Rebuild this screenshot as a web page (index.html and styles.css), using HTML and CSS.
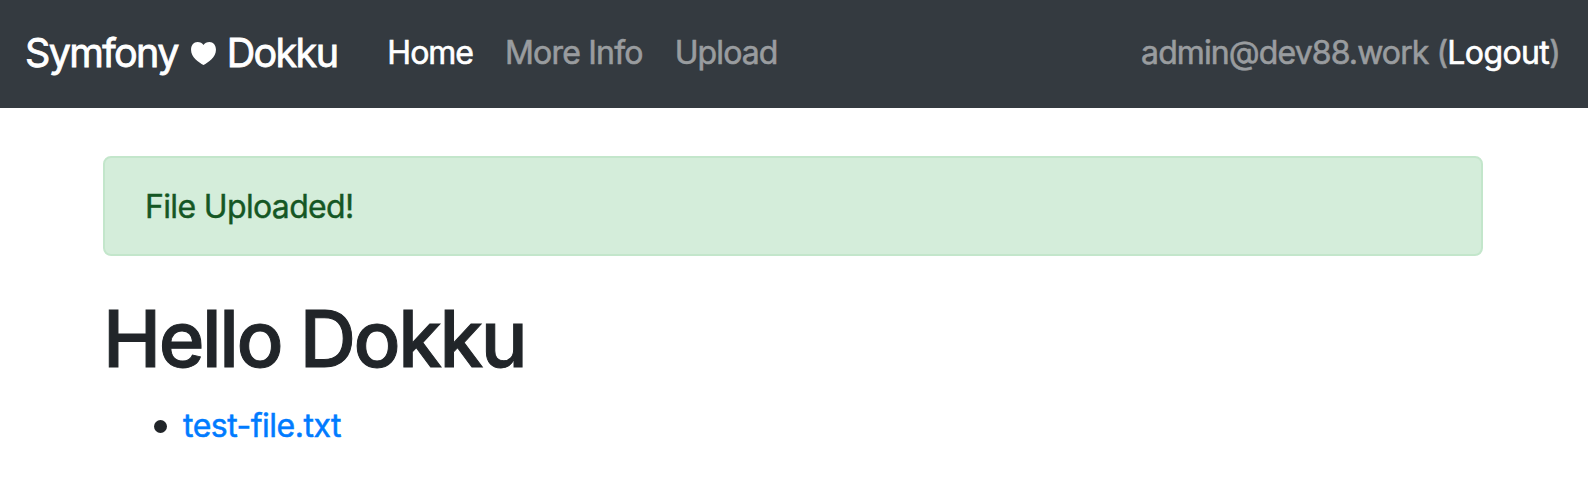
FILE: index.html
```html
<!DOCTYPE html>
<html lang="en">
<head>
<meta charset="utf-8">
<title>Hello Dokku</title>
<link rel="stylesheet" href="styles.css">
</head>
<body>
<nav class="navbar">
  <a class="brand"><span class="brand-a">Symfony</span><svg class="heart" viewBox="0 0 26 24"><path d="M13 24C8 21 0 16 0 8C0 3 3 0 6.700 0C9.500 0 11.800 1 13 3.200C14.200 1 16.500 0 19.300 0C23 0 26 3 26 8C26 16 18 21 13 24Z"/></svg><span class="brand-b">Dokku</span></a>
  <a class="link home">Home</a>
  <a class="link info">More Info</a>
  <a class="link upload">Upload</a>
  <span class="user"><span class="email">admin@dev88.work (</span><a class="logout">Logout</a>)</span>
</nav>
<main class="container">
  <div class="alert"><span class="alert-text">File Uploaded!</span></div>
  <h1 class="title"><span class="title-text">Hello Dokku</span></h1>
  <ul class="files"><li class="item"><a class="file">test-file.txt</a></li></ul>
</main>
</body>
</html>
```
FILE: styles.css
```css
body{margin:0;background:#fff;color:#212529;font-family:Inter,"Liberation Sans",sans-serif;font-size:32px;line-height:48px}
.navbar{display:flex;align-items:center;box-sizing:border-box;height:108px;padding:0 28px 2px 25px;background:#343a40;color:#999c9f;white-space:nowrap;-webkit-text-stroke:.6px currentColor}
.brand{display:flex;align-items:center;color:#fff;font-size:39.5px;letter-spacing:-1.65px;margin-right:50px;-webkit-text-stroke:.8px currentColor}
.heart{width:25px;height:23px;fill:#fff;stroke:none;margin:0 11px 0 13px}
.link{margin-right:32px;letter-spacing:-1px}
.info{letter-spacing:-.8px}
.upload{letter-spacing:-.9px}
.home,.logout{color:#fff;-webkit-text-stroke:.6px #fff}
.user{margin-left:auto;letter-spacing:-.9px}
.logout{letter-spacing:-.6px}
.container{padding:48px 105px 0 103px}
.alert{box-sizing:border-box;height:100px;padding:25px 40px;border:2px solid #c3e6cb;border-radius:8px;background:#d4edda;color:#155724;letter-spacing:-.65px;-webkit-text-stroke:.4px #155724}
.title{margin:35px 0 15px;font-size:78px;line-height:96px;font-weight:500;letter-spacing:-2.4px;-webkit-text-stroke:1px #212529}
.files{margin:0;padding:0 0 0 51px;list-style:none;letter-spacing:-.5px}
.item{display:flex;align-items:center;gap:16px}
.item::before{content:"";width:13px;height:13px;border-radius:50%;background:#212529}
.file{color:#007bff;-webkit-text-stroke:.5px #007bff}
```
